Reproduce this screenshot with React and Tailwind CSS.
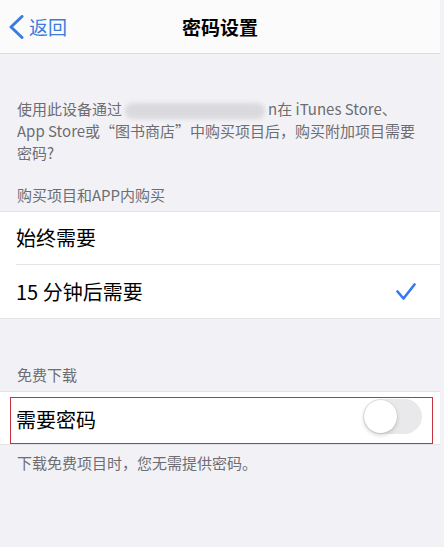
import { useState } from 'react';

const font = { fontFamily: '"Noto Sans CJK SC", "Noto Sans", sans-serif' };

const Row = ({ children, right, last }) => (
  <div className="flex items-center h-[53px] pl-4">
    <div
      className={`flex items-center flex-1 h-full pr-6 ${last ? '' : 'border-b border-[#e4e4e8]'}`}
    >
      <span className="flex-1 text-[20px] leading-none text-black">{children}</span>
      {right}
    </div>
  </div>
);

const Check = () => (
  <svg width="20" height="18" viewBox="0 0 20 18" className="mr-0">
    <path
      d="M1.5 8.5 L7.5 15.5 L18.5 1.5"
      fill="none"
      stroke="#3478f6"
      strokeWidth="2.6"
      strokeLinecap="round"
      strokeLinejoin="round"
    />
  </svg>
);

const Toggle = ({ on, onChange }) => (
  <button
    type="button"
    onClick={() => onChange(!on)}
    className={`relative w-[59px] h-[35px] rounded-full transition ${on ? 'bg-[#34c759]' : 'bg-[#e9e9eb]'}`}
  >
    <span
      className={`absolute top-[1px] w-[33px] h-[33px] rounded-full bg-white shadow-[0_2px_4px_rgba(0,0,0,0.18),0_0_0_0.5px_rgba(0,0,0,0.06)] transition-all ${on ? 'left-[25px]' : 'left-[1px]'}`}
    />
  </button>
);

export default function App() {
  const [option, setOption] = useState('15');
  const [needPassword, setNeedPassword] = useState(false);

  return (
    <div className="w-[444px] h-[547px] bg-[#f2f2f6] overflow-hidden" style={font}>
      <div className="w-[440px]">
        {/* nav bar */}
        <div className="relative flex items-center h-[54px] bg-[#fbfbfc] border-b border-[#dcdce0]">
          <button type="button" className="flex items-center pl-[9px] text-[#3b7ddd]">
            <svg width="16" height="24" viewBox="0 0 16 24">
              <path
                d="M13 1.5 L2 12 L13 22.5"
                fill="none"
                stroke="#3b7ddd"
                strokeWidth="3"
                strokeLinecap="round"
                strokeLinejoin="round"
              />
            </svg>
            <span className="ml-[4px] text-[19px] leading-none">返回</span>
          </button>
          <h1 className="absolute inset-x-0 text-center text-[19px] font-semibold leading-none text-black pointer-events-none">
            密码设置
          </h1>
        </div>

        {/* description */}
        <p className="pt-[44px] px-[17px] text-[15px] leading-[22px] text-[#6d6d72]">
          使用此设备通过
          <span className="inline-block align-middle w-[140px] h-[16px] mx-[3px] rounded-full bg-[#d9d9de] blur-[2px]" />
          n在 iTunes Store、App Store或“图书商店”中购买项目后，购买附加项目需要密码?
        </p>

        <p className="pt-[20px] pb-[5px] px-[17px] text-[15px] leading-[22px] text-[#6d6d72]">
          购买项目和APP内购买
        </p>

        <div className="bg-white border-y border-[#e4e4e8]">
          <div onClick={() => setOption('always')}>
            <Row right={option === 'always' ? <Check /> : null}>始终需要</Row>
          </div>
          <div onClick={() => setOption('15')}>
            <Row last right={option === '15' ? <Check /> : null}>15 分钟后需要</Row>
          </div>
        </div>

        <p className="pt-[45px] pb-[5px] px-[17px] text-[15px] leading-[22px] text-[#6d6d72]">
          免费下载
        </p>

        <div className="relative bg-white border-y border-[#e4e4e8]">
          <div className="flex items-center h-[52px] pl-4 pr-[18px]">
            <span className="flex-1 text-[20px] leading-none text-black pt-[4px]">需要密码</span>
            <div className="pt-[2px]">
              <Toggle on={needPassword} onChange={setNeedPassword} />
            </div>
          </div>
          {/* highlight frame */}
          <div className="absolute left-[10px] top-[5px] w-[423px] h-[47px] border border-[#c8323c] pointer-events-none" />
        </div>

        <p className="pt-[7px] px-[17px] text-[15px] leading-[22px] text-[#6d6d72]">
          下载免费项目时，您无需提供密码。
        </p>
      </div>
    </div>
  );
}
